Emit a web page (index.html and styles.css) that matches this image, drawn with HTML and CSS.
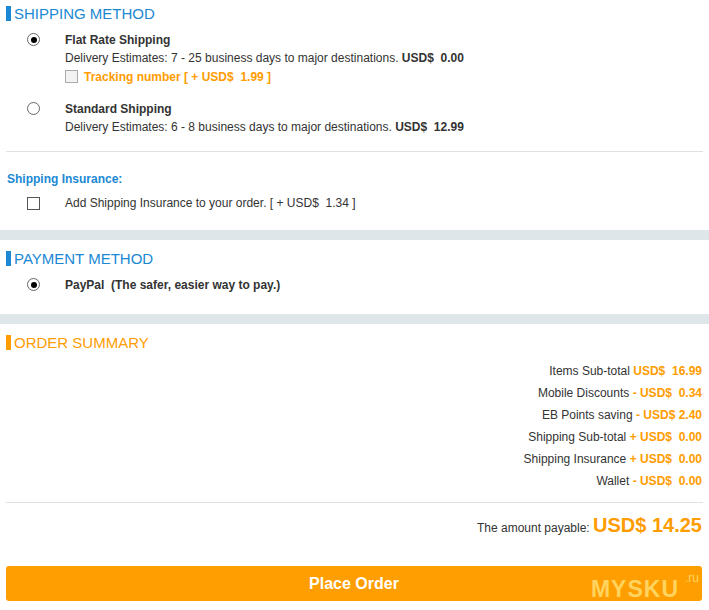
FILE: index.html
```html
<!DOCTYPE html>
<html lang="en">
<head>
    <meta charset="UTF-8">
    <title>Checkout</title>
    <link rel="stylesheet" href="styles.css">
</head>
<body>
<div class="block">
    <h2 class="section-title">SHIPPING METHOD</h2>
    <div class="option first">
        <span class="radio checked"></span>
        <div class="option-body">
            <div class="option-name">Flat Rate Shipping</div>
            <div>Delivery Estimates: 7 - 25 business days to major destinations. <b class="price">USD$  0.00</b></div>
            <div class="tracking"><span class="check disabled"></span><span>Tracking number [ + USD$  1.99 ]</span></div>
        </div>
    </div>
    <div class="option second">
        <span class="radio"></span>
        <div class="option-body">
            <div class="option-name">Standard Shipping</div>
            <div>Delivery Estimates: 6 - 8 business days to major destinations. <b class="price">USD$  12.99</b></div>
        </div>
    </div>
    <hr class="line">
    <div class="insurance-title">Shipping Insurance:</div>
    <div class="option insurance">
        <span class="check"></span>
        <div class="option-body"><span class="pre">Add Shipping Insurance to your order. [ + USD$  1.34 ]</span></div>
    </div>
</div>
<div class="band"></div>
<div class="block">
    <h2 class="section-title">PAYMENT METHOD</h2>
    <div class="option paypal">
        <span class="radio checked"></span>
        <div class="option-body"><b class="pre">PayPal  (The safer, easier way to pay.)</b></div>
    </div>
</div>
<div class="band"></div>
<div class="block">
    <h2 class="section-title orange">ORDER SUMMARY</h2>
    <div class="summary">
        <div class="row">Items Sub-total <b>USD$  16.99</b></div>
        <div class="row">Mobile Discounts <b>- USD$  0.34</b></div>
        <div class="row">EB Points saving <b>- USD$ 2.40</b></div>
        <div class="row">Shipping Sub-total <b>+ USD$  0.00</b></div>
        <div class="row">Shipping Insurance <b>+ USD$  0.00</b></div>
        <div class="row">Wallet <b>- USD$  0.00</b></div>
    </div>
    <hr class="line">
    <div class="total">The amount payable: <b>USD$ 14.25</b></div>
    <button class="place-order">Place Order<span class="mark">MYSKU<sup>.ru</sup></span></button>
</div>
</body>
</html>
```

FILE: styles.css
```css
body {
    font-family: "Liberation Sans", Arial, sans-serif;
    font-size: 12px;
    color: #333;
    margin: 0;
    background: #fff;
}
.block {
    padding: 0 7px 0 6px;
}
.section-title {
    margin: 0;
    padding: 5px 0 0 0;
    font-size: 15px;
    font-weight: normal;
    color: #1a88d3;
}
.section-title::before {
    content: "";
    display: inline-block;
    width: 5px;
    height: 15px;
    background: #1a88d3;
    margin-right: 3px;
    vertical-align: -2px;
}
.section-title.orange {
    color: #ff9c00;
}
.section-title.orange::before {
    background: #ff9c00;
}
.option {
    display: flex;
    align-items: flex-start;
    padding-left: 21px;
    line-height: 18px;
}
.option.first {
    margin-top: 9px;
}
.option.second {
    margin-top: 14px;
}
.option-body {
    margin-left: 25px;
}
.option-name {
    font-weight: bold;
}
.price {
    white-space: pre;
}
.pre {
    white-space: pre;
}
.radio {
    width: 11px;
    height: 11px;
    border: 1px solid #666;
    border-radius: 50%;
    margin-top: 2px;
    display: flex;
    align-items: center;
    justify-content: center;
    flex-shrink: 0;
    background: #fff;
}
.radio.checked::after {
    content: "";
    width: 6px;
    height: 6px;
    border-radius: 50%;
    background: #000;
}
.check {
    width: 11px;
    height: 11px;
    border: 1px solid #555;
    background: #fff;
    flex-shrink: 0;
    margin-top: 3px;
}
.check.disabled {
    border-color: #aaa;
    background: #f2f2f2;
    margin-top: 0;
}
.tracking {
    display: flex;
    align-items: center;
    gap: 6px;
    height: 19px;
    color: #ff9c00;
    font-weight: bold;
    white-space: pre;
}
.line {
    border: 0;
    border-top: 1px solid #e0e0e0;
    margin: 15px 0 0 0;
    width: 697px;
}
.insurance-title {
    margin-top: 18px;
    padding-left: 1px;
    color: #1a88d3;
    font-weight: bold;
    line-height: 18px;
}
.option.insurance {
    margin-top: 6px;
}
.band {
    height: 10px;
    background: #dfe6e9;
    margin: 18px 0 5px 0;
}
.option.paypal {
    margin-top: 9px;
    padding-bottom: 2px;
}
.summary {
    margin-top: 9px;
    width: 696px;
    text-align: right;
}
.summary .row {
    line-height: 22px;
}
.summary b {
    color: #ff9c00;
    white-space: pre;
}
.summary + .line {
    margin-top: 10px;
}
.total {
    width: 696px;
    text-align: right;
    margin-top: 9px;
    line-height: 26px;
}
.total b {
    color: #ff9c00;
    font-size: 20px;
}
.place-order {
    position: relative;
    display: block;
    width: 696px;
    height: 35px;
    margin-top: 25px;
    border: 0;
    border-radius: 3px;
    background: #ff9e00;
    color: #fff;
    font-family: "Liberation Sans", Arial, sans-serif;
    font-size: 16px;
    font-weight: bold;
}
.mark {
    position: absolute;
    right: 23px;
    top: 10px;
    font-size: 23px;
    font-weight: bold;
    letter-spacing: 1px;
    color: rgba(255, 226, 120, 0.8);
}
.mark sup {
    position: absolute;
    top: -5px;
    right: -20px;
    font-size: 12px;
    font-weight: normal;
    letter-spacing: 0;
}
```
